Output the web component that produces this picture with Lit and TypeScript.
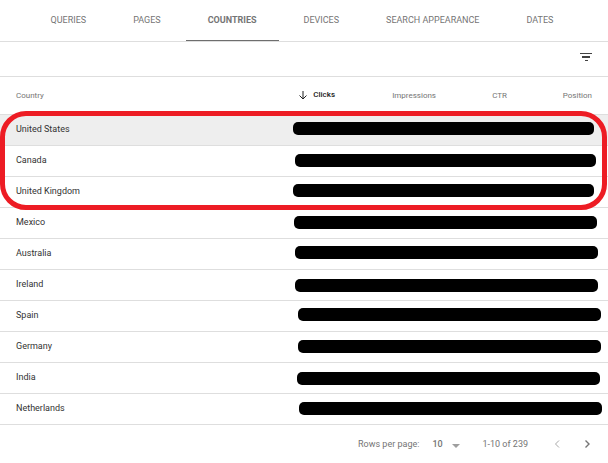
import { LitElement, html, css } from "lit";
import { customElement, state } from "lit/decorators.js";
import { classMap } from "lit/directives/class-map.js";
import { styleMap } from "lit/directives/style-map.js";

interface CountryRow {
  name: string;
  // extent of the redaction mark inside the metrics cell
  top: number;
  left: number;
  right: number;
}

const TABS = ["QUERIES", "PAGES", "COUNTRIES", "DEVICES", "SEARCH APPEARANCE", "DATES"];

const ROWS: CountryRow[] = [
  { name: "United States", top: 7, left: 10, right: 14 },
  { name: "Canada", top: 8, left: 12, right: 12 },
  { name: "United Kingdom", top: 7, left: 10, right: 14 },
  { name: "Mexico", top: 8, left: 11, right: 11 },
  { name: "Australia", top: 7, left: 12, right: 10 },
  { name: "Ireland", top: 9, left: 12, right: 10 },
  { name: "Spain", top: 7, left: 15, right: 7 },
  { name: "Germany", top: 8, left: 15, right: 7 },
  { name: "India", top: 9, left: 14, right: 8 },
  { name: "Netherlands", top: 8, left: 16, right: 6 },
];

@customElement("app-root")
export class AppRoot extends LitElement {
  @state() private tab = "COUNTRIES";

  static styles = css`
    :host {
      display: block;
      background: #fff;
      color: #757575;
      font-family: Roboto, sans-serif;
      font-size: 9px;
      line-height: 12px;
    }
    button,
    select {
      font: inherit;
      color: inherit;
      background: none;
      border: 0;
      margin: 0;
      padding: 0;
      cursor: pointer;
    }
    svg {
      display: block;
    }
    .tabs {
      display: flex;
      justify-content: center;
      gap: 3px;
      height: 41px;
      padding-right: 4px;
      border-bottom: 1px solid #dedede;
    }
    .tab {
      padding: 0 22px;
      border-bottom: 1px solid transparent;
      white-space: nowrap;
    }
    .tab.active {
      font-weight: 700;
      border-bottom-color: #6e6e6e;
    }
    .toolbar {
      display: flex;
      align-items: center;
      justify-content: flex-end;
      box-sizing: border-box;
      height: 35px;
      padding: 0 16px 4px;
      border-bottom: 1px solid #dedede;
    }
    .panel {
      position: relative;
    }
    table {
      width: 100%;
      table-layout: fixed;
      border-collapse: separate;
      border-spacing: 0;
    }
    th,
    td {
      box-sizing: border-box;
      padding: 0 16px;
      border-bottom: 1px solid #dedede;
      text-align: left;
      white-space: nowrap;
    }
    th {
      height: 38px;
      font-size: 8px;
      font-weight: 400;
    }
    th.metric {
      padding-left: 0;
      text-align: right;
    }
    .clicks {
      width: 68px;
    }
    .impressions {
      width: 101px;
    }
    .ctr {
      width: 71px;
    }
    .position {
      width: 85px;
    }
    .sort {
      display: inline-flex;
      align-items: center;
      gap: 6px;
      vertical-align: middle;
      color: #212121;
      font-weight: 500;
    }
    td {
      height: 31px;
      padding-bottom: 2px;
      color: #333;
    }
    .selected td {
      background: #eee;
    }
    td.values {
      position: relative;
    }
    .mark {
      position: absolute;
      height: 13px;
      border-radius: 5px;
      background: #000;
    }
    .ring {
      position: absolute;
      top: 34px;
      left: 0;
      right: 1px;
      height: 99px;
      box-sizing: border-box;
      border: 5px solid #ed1c24;
      border-radius: 26px;
      pointer-events: none;
    }
    .pager {
      display: flex;
      align-items: center;
      justify-content: flex-end;
      height: 38px;
      padding-right: 16px;
    }
    .size {
      display: flex;
      align-items: center;
      margin-right: 22px;
    }
    .size select {
      appearance: none;
      width: 20px;
      margin-left: 13px;
      font-weight: 500;
    }
    .nav {
      display: flex;
      gap: 20px;
      margin-left: 24px;
    }
    .nav button:disabled {
      color: #a8a8a8;
    }
  `;

  render() {
    return html`
      <nav class="tabs" role="tablist">
        ${TABS.map(
          (t) => html`<button
            class=${classMap({ tab: true, active: t === this.tab })}
            role="tab"
            aria-selected=${t === this.tab}
            @click=${() => (this.tab = t)}
          >${t}</button>`
        )}
      </nav>
      <div class="toolbar">
        <button aria-label="Filter">
          <svg width="12" height="8" viewBox="0 0 12 8" fill="#424242">
            <path d="M0 0h12v1H0zM2 3h8v2H2zM5 7h3v1H5z" />
          </svg>
        </button>
      </div>
      <div class="panel">
        <table>
          <thead>
            <tr>
              <th scope="col">Country</th>
              <th scope="col" class="metric clicks" aria-sort="descending">
                <button class="sort">
                  <svg width="8" height="9" viewBox="0 0 8 9" fill="none" stroke="currentColor">
                    <path d="M4 0v8M.5 4.5L4 8l3.5-3.5" />
                  </svg>
                  Clicks
                </button>
              </th>
              <th scope="col" class="metric impressions">Impressions</th>
              <th scope="col" class="metric ctr">CTR</th>
              <th scope="col" class="metric position">Position</th>
            </tr>
          </thead>
          <tbody>
            ${ROWS.map(
              (r, i) => html`<tr class=${classMap({ selected: i === 0 })}>
                <td>${r.name}</td>
                <td class="values" colspan="4">
                  <span
                    class="mark"
                    style=${styleMap({ top: `${r.top}px`, left: `${r.left}px`, right: `${r.right}px` })}
                  ></span>
                </td>
              </tr>`
            )}
          </tbody>
        </table>
        <div class="ring"></div>
      </div>
      <footer class="pager">
        <div class="size">
          <label for="rows">Rows per page:</label>
          <select id="rows">
            <option>10</option>
            <option>25</option>
            <option>50</option>
          </select>
          <svg width="8" height="8" viewBox="0 0 8 8" fill="#9e9e9e"><path d="M0 4h8L4 8z" /></svg>
        </div>
        <span>1-10 of 239</span>
        <div class="nav">
          <button disabled aria-label="Previous page">
            <svg width="10" height="10" viewBox="0 0 10 10" fill="none" stroke="currentColor">
              <path d="M7 1.5L3.5 5L7 8.5" />
            </svg>
          </button>
          <button aria-label="Next page">
            <svg width="10" height="10" viewBox="0 0 10 10" fill="none" stroke="currentColor" stroke-width="1.4">
              <path d="M3.5 1.5L7 5L3.5 8.5" />
            </svg>
          </button>
        </div>
      </footer>
    `;
  }
}
